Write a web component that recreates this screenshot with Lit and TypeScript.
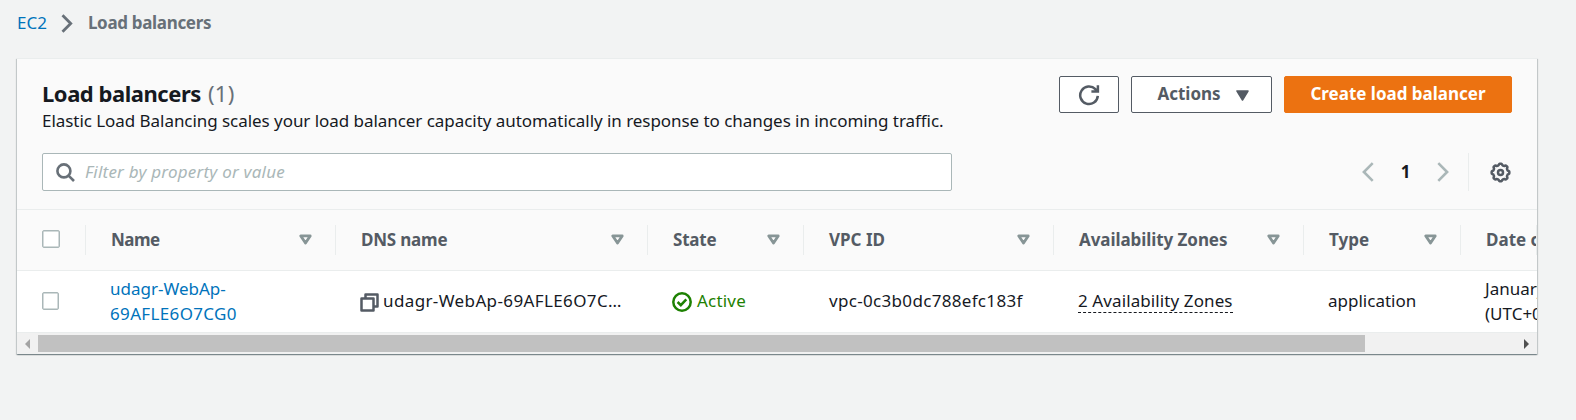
import { LitElement, html, css } from "lit";
import { customElement } from "lit/decorators.js";

const columns = [
  { key: "name", label: "Name" },
  { key: "dnsname", label: "DNS name" },
  { key: "state", label: "State" },
  { key: "vpcid", label: "VPC ID" },
  { key: "zones", label: "Availability Zones" },
  { key: "type", label: "Type" },
  { key: "date", label: "Date created" },
];

// Outline of the settings gear: eight rounded teeth around the centre.
const gearPath = (() => {
  const pts: string[] = [];
  for (let i = 0; i < 96; i++) {
    const a = (i / 96) * Math.PI * 2;
    const wave = Math.max(-1, Math.min(1, 1.7 * Math.cos(8 * a)));
    const r = 8.1 + 0.75 * wave;
    pts.push(`${(10.5 + r * Math.sin(a)).toFixed(2)} ${(10.5 - r * Math.cos(a)).toFixed(2)}`);
  }
  return `M${pts.join("L")}Z`;
})();

@customElement("app-root")
class AppRoot extends LitElement {
  static styles = css`
    :host { display: block; height: 420px; overflow: hidden; background: #f2f3f3; color: #16191f;
      font: 17px/25px "Noto Sans", sans-serif; box-sizing: border-box; padding: 9px 38px 0 17px; white-space: nowrap; }
    * { box-sizing: border-box; }
    svg { display: block; flex: none; }
    .crumbs { display: flex; align-items: center; height: 26px; }
    .crumbs svg { margin: 3px 15px 0 14px; }
    .link { color: #0073bb; }
    .crumb { color: #687078; font-weight: 700; letter-spacing: -.32px; }
    .panel { margin-top: 23px; width: 1520px; height: 296px; background: #fafafa; border-top: 1px solid #eaeded;
      box-shadow: 0 1px 1px 0 rgba(0,28,36,.3), 1px 1px 1px 0 rgba(0,28,36,.15), -1px 1px 1px 0 rgba(0,28,36,.15); }
    .top { height: 151px; padding: 17px 25px 0; border-bottom: 1px solid #eaeded; }
    .head { display: flex; justify-content: space-between; height: 77px; }
    .title { display: flex; gap: 7px; margin-top: 2px; font-size: 22px; line-height: 30px; height: 30px; }
    .title b { font-weight: 700; letter-spacing: -.46px; }
    .count { color: #687078; letter-spacing: .3px; }
    .desc { letter-spacing: -.05px; }
    .actions { display: flex; gap: 12px; height: 37px; }
    .btn { height: 37px; border: 1px solid #545b64; border-radius: 2px; background: #fff; color: #545b64;
      font-weight: 700; display: flex; align-items: center; justify-content: center; padding-bottom: 2px; }
    .refresh { width: 60px; padding: 1px 0 0; }
    .menu { width: 141px; gap: 15px; padding-left: 3px; }
    .menu svg { margin-top: 3px; }
    .primary { width: 228px; background: #ec7211; border-color: #ec7211; color: #fff; }
    .tools { display: flex; justify-content: space-between; align-items: center; }
    .search { width: 910px; height: 38px; border: 1px solid #aab7b8; border-radius: 2px; background: #fff; display: flex;
      align-items: center; padding: 0 0 1px 13px; gap: 10px; color: #aab7b8; font-style: italic; letter-spacing: .22px; }
    .search svg { margin-top: 1px; }
    .pager { display: flex; align-items: center; height: 38px; }
    .page { width: 63px; text-align: center; font-weight: 700; padding: 0 0 2px 0; }
    .sep { width: 1px; height: 38px; background: #eaeded; margin: 0 21px 0 19px; }
    .gear { margin-right: 1px; }
    .grid { overflow: hidden; display: grid; grid-template-columns: 69px 250px 312px 156px 250px 250px 157px 76px; }
    .th { height: 61px; border-bottom: 1px solid #eaeded; display: flex; align-items: center; justify-content: space-between;
      padding: 0 24px 1px 25px; position: relative; color: #545b64; font-weight: 700; overflow: hidden; }
    .th::after { content: ""; position: absolute; right: 0; top: 15px; width: 1px; height: 30px; background: #eaeded; }
    .th:last-child::after { display: none; }
    .td { height: 62px; background: #fff; border-bottom: 1px solid #eaeded; display: flex; align-items: center;
      padding: 0 0 2px 24px; overflow: hidden; }
    .two { flex-direction: column; align-items: flex-start; justify-content: center; }
    .box { width: 18px; height: 18px; border: 1px solid #aab7b8; box-shadow: inset 0 0 0 .5px #aab7b8; border-radius: 2px; background: #fff; }
    .th .box { margin-top: -2px; }
    .td .box { margin: 0 0 0 1px; width: 17px; }
    .name { letter-spacing: -.5px; }
    .dnsname, .state { letter-spacing: -.2px; }
    .zones { letter-spacing: -.07px; }
    .id { letter-spacing: .35px; }
    .vpc { margin-left: 1px; letter-spacing: .32px; }
    .dns { margin-left: 4px; letter-spacing: .38px; }
    .act { margin-left: 5px; letter-spacing: .2px; }
    .td svg { margin-top: 3px; }
    .green { color: #1d8102; }
    .dash { border-bottom: 1px dashed #16191f; line-height: 22px; letter-spacing: .1px; padding-top: 1px; }
    .bar { height: 21px; background: #f1f1f1; display: flex; align-items: center; padding: 0 8px; }
    .thumb { height: 17px; width: 1327px; background: #c1c1c1; margin-left: 8px; }
    .bar .right { margin-left: auto; }
  `;
  sort() {
    return html`<svg width="13" height="11" viewBox="0 0 13 11"><path d="M1.8 1.9H11.2L6.5 9Z" fill="none" stroke="#879596" stroke-width="2.8" stroke-linejoin="round"/></svg>`;
  }
  render() {
    return html`
      <div class="crumbs"><span class="link">EC2</span>
        <svg width="12" height="19" viewBox="0 0 12 19"><path d="M1.5 1.3 9.7 9.5 1.5 17.7" fill="none" stroke="#687078" stroke-width="2.8"/></svg>
        <span class="crumb">Load balancers</span></div>
      <div class="panel">
        <div class="top">
          <div class="head">
            <div><div class="title"><b>Load balancers</b><span class="count">(1)</span></div>
              <span class="desc">Elastic Load Balancing scales your load balancer capacity automatically in response to changes in incoming traffic.</span></div>
            <div class="actions">
              <div class="btn refresh"><svg width="22" height="22" viewBox="0 0 22 22" fill="none" stroke="#545b64" stroke-width="2.5"><path d="M19.8 11.8A8.8 8.8 0 1 1 17.4 5.2L19.6 7.4M19.9 1.2V7.5H13.4"/></svg></div>
              <div class="btn menu"><span>Actions</span><svg width="13" height="11" viewBox="0 0 13 11"><path d="M1 1H12L6.5 10Z" fill="#545b64" stroke="#545b64" stroke-width="1.5" stroke-linejoin="round"/></svg></div>
              <div class="btn primary"><span>Create load balancer</span></div>
            </div>
          </div>
          <div class="tools">
            <div class="search"><svg width="19" height="19" viewBox="0 0 19 19" fill="none" stroke="#687078" stroke-width="2.6"><circle cx="7.9" cy="7.9" r="6.5"/><path d="M12.3 12.3 18 18"/></svg><span>Filter by property or value</span></div>
            <div class="pager">
              <svg width="12" height="20" viewBox="0 0 12 20"><path d="M10.7 1.2 1.9 10 10.7 18.8" fill="none" stroke="#aab7b8" stroke-width="2.6"/></svg>
              <span class="page">1</span>
              <svg width="12" height="20" viewBox="0 0 12 20"><path d="M1.3 1.2 10.1 10 1.3 18.8" fill="none" stroke="#aab7b8" stroke-width="2.6"/></svg>
              <span class="sep"></span>
              <svg class="gear" width="21" height="21" viewBox="0 0 21 21" fill="none" stroke="#545b64" stroke-width="2.5" stroke-linejoin="round"><path d=${gearPath}/><circle cx="10.5" cy="10.5" r="2.5"/></svg>
            </div>
          </div>
        </div>
        <div class="grid">
          <div class="th"><span class="box"></span></div>
          ${columns.map((c) => html`<div class="th"><span class=${c.key}>${c.label}</span>${c.key === "date" ? "" : this.sort()}</div>`)}
          <div class="td"><span class="box"></span></div>
          <div class="td two link"><span>udagr-WebAp-</span><span class="id">69AFLE6O7CG0</span></div>
          <div class="td"><svg width="19" height="19" viewBox="0 0 19 19" fill="none" stroke="#545b64" stroke-width="2.5" stroke-linejoin="round"><path d="M1.5 5.5H13.5V17.5H1.5Z"/><path d="M5.5 5V1.5H17.5V13.5H14"/></svg><span class="dns">udagr-WebAp-69AFLE6O7C…</span></div>
          <div class="td green"><svg width="20" height="20" viewBox="0 0 20 20" fill="none" stroke="#1d8102" stroke-width="2.5"><circle cx="10" cy="10" r="8.7"/><path d="M5.6 10 8.8 13.1 14.3 7.3"/></svg><span class="act">Active</span></div>
          <div class="td"><span class="vpc">vpc-0c3b0dc788efc183f</span></div>
          <div class="td"><span class="dash">2 Availability Zones</span></div>
          <div class="td"><span>application</span></div>
          <div class="td two"><span>January</span><span>(UTC+00</span></div>
        </div>
        <div class="bar"><svg width="5" height="10"><path d="M5 0V10L0 5Z" fill="#a3a3a3"/></svg><div class="thumb"></div><svg class="right" width="5" height="10"><path d="M0 0V10L5 5Z" fill="#505050"/></svg></div>
      </div>
    `;
  }
}
